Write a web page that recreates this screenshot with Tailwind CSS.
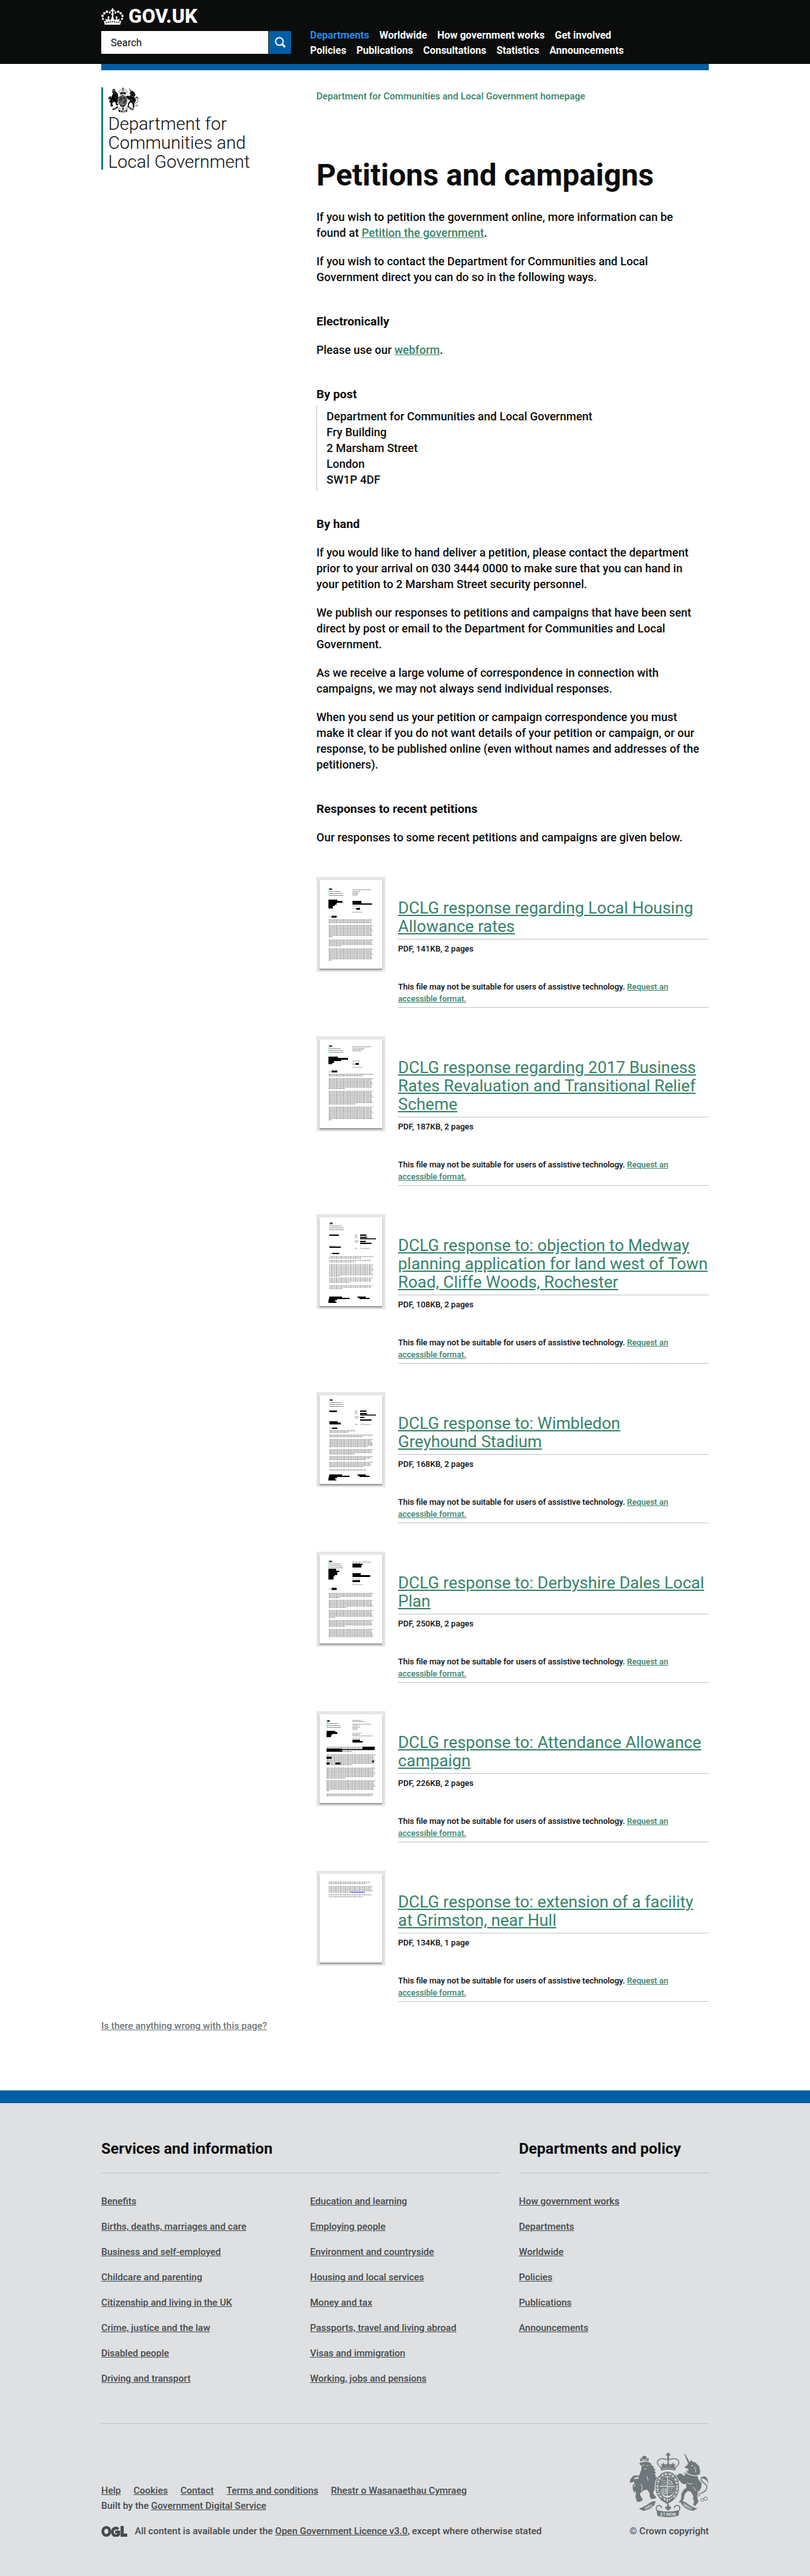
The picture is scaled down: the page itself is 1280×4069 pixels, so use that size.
<!DOCTYPE html>
<html lang="en">
<head>
<meta charset="utf-8">
<meta name="viewport" content="width=device-width, initial-scale=1">
<title>Petitions and campaigns - GOV.UK</title>
<script src="https://cdn.jsdelivr.net/npm/@tailwindcss/browser@4"></script>
</head>
<body class="bg-white text-[#0b0c0c] [font-family:Roboto,'Liberation_Sans',sans-serif]">

<!-- Shared royal arms drawing -->
<svg class="hidden" aria-hidden="true">
  <symbol id="arms" viewBox="30 27 376 307">
    <!-- crown -->
    <g fill="currentColor">
      <path d="M209 27h8v6h6v8h-6v12h-8V41h-6v-8h6z"/>
      <circle cx="213" cy="55" r="5"/>
      <path d="M176 96q37-12 74 0l-3 17q-34-9-68 0z"/>
      <path d="M184 94l-6-14 8 4 4-10 5 10 8-4-4 13zM204 91l-3-11 7 4 5-12 5 12 7-4-3 11zM226 93l-3-13 8 4 5-10 4 10 8-4-6 14z"/>
    </g>
    <g fill="none" stroke="currentColor" stroke-width="6" stroke-dasharray="6 2">
      <path d="M176 96Q154 76 166 64q14-15 44-2"/>
      <path d="M250 96Q272 76 260 64q-14-15-44-2"/>
    </g>
    <path d="M213 60v24" stroke="currentColor" stroke-width="7" stroke-dasharray="5 2"/>
    <path d="M184 105q29-8 58 0" fill="none" stroke="var(--paper)" stroke-width="3" stroke-dasharray="6 3"/>
    <!-- lion -->
    <g fill="currentColor">
      <path d="M81 70l-2-17 9 4 2-12 6 0 2-4 4 0 2 4 6 0 1 11 9-4 0 16q-20-6-39 2z"/>
      <path d="M85 76q17-10 35-4l12 8 2 8 12 5-4 6 12 10-7 4 9 11-8 2 7 12-9 2 2 16 8 18 14 22-2 6-18-22q2 22-8 36l4 12 10 10-4 8-18 2-8-8-2-22-12-16-18 6-16 14 4 12 10 14-2 8-16 6-10-2-6-22 2-30 12-24 2-46 10-26 4-22-8-4-4-8 8-6z"/>
      <path d="M98 142l-24 10-18 0-8 10 6 12 22 4 30-6zM88 170l-28 6-6 12-8 8 6 12 14 6 8-8 22-10zM140 130l16 14 14-2 8 8-4 12-14 4-22-12z"/>
      <path d="M30 171l4-18 12-14 10-4 16 6-18 4-6 22z"/>
    </g>
    <path d="M54 216q-12-22-4-36 30-18 26-34-6-14-22-2" fill="none" stroke="currentColor" stroke-width="6"/>
    <path d="M87 62l26-2M92 88l8-3M110 88l8 2M98 104l12 2M84 176q10 16 2 34M112 140l6 20" fill="none" stroke="var(--paper)" stroke-width="3"/>
    <!-- unicorn -->
    <g fill="currentColor">
      <path d="M289 33l6 3 24 44-9 4z"/>
      <path d="M306 84l12-14 4-10 6 10 14 4 18 18 6 28-8 14-6 4 6 18 14 16-2 24-16 16-4 20 6 26-12 22-12-2 4-18-4-28-12-20-14-2-14 14-6 28-12 12-12 0 12-14 2-28 12-20 12-8-2-20-14-22-16 8-14 24-6-6 12-28-20-10 2-8 30 4 22 0 8-14 14-22-16 2-10-4z"/>
      <path d="M302 100l8-14 22 0-4 14-18 8zM268 158l10-8 16 8 4 16-10 4-14-8zM262 126l16 2 8 12-10 6-14-8z"/>
      <path d="M370 146l18-6 12 12 4 24-10-18z"/>
    </g>
    <path d="M364 222q30-8 34-30-2-14-18-22-16-14-8-22 12-12 24 8" fill="none" stroke="currentColor" stroke-width="5"/>
    <path d="M298 122q28 22 64 12" fill="none" stroke="var(--paper)" stroke-width="4"/>
    <path d="M300 113q30 22 64 12" fill="none" stroke="currentColor" stroke-width="7" stroke-dasharray="4 3"/>
    <path d="M322 90l10-2M336 94q12 12 8 28M304 170q10 10 24 6M332 190l14 20" fill="none" stroke="var(--paper)" stroke-width="3"/>
    <g fill="none" stroke="currentColor" stroke-width="3">
      <circle cx="295" cy="128" r="5"/><circle cx="284" cy="141" r="5"/><circle cx="353" cy="182" r="6"/><circle cx="358" cy="205" r="6"/><circle cx="357" cy="228" r="6"/><circle cx="337" cy="245" r="6"/><circle cx="349" cy="260" r="7"/><circle cx="375" cy="252" r="7"/><circle cx="391" cy="246" r="8"/>
    </g>
    <!-- garter and quartered shield -->
    <ellipse cx="209" cy="190" rx="60" ry="74" fill="var(--paper)"/>
    <ellipse cx="209" cy="190" rx="46" ry="62" fill="none" stroke="currentColor" stroke-width="20"/>
    <ellipse cx="209" cy="190" rx="47" ry="62" fill="none" stroke="var(--paper)" stroke-width="10" stroke-dasharray="3 4 7 3 2 4 8 6"/>
    <ellipse cx="209" cy="188" rx="36" ry="46" fill="currentColor"/>
    <path d="M209 142v92M173 188h72" stroke="var(--paper)" stroke-width="4"/>
    <g fill="none" stroke="var(--paper)" stroke-width="3">
      <path d="M184 160h20M182 170h22M180 180h24M214 196h24M214 206h22M214 216h18" stroke-dasharray="7 3"/>
      <path d="M216 178V156q12 2 18 22zM221 172l8-8"/>
      <path d="M184 196v18q6 8 12 12M191 196v24M198 196v28M204 196v30"/>
    </g>
    <path d="M182 242l26 18 26-18 6 10-31 20-32-20z" fill="currentColor"/>
    <path d="M194 250l4 4M208 258v5M222 250l-3 5" stroke="var(--paper)" stroke-width="4"/>
    <!-- motto scroll -->
    <g fill="currentColor">
      <path d="M74 294l20 10q30-2 54-28l6-18q-12 0-22 4-26 20-58 32z"/>
      <path d="M352 294l-20 10q-30-2-54-28l-8-18q12 0 24 4 26 22 58 32z"/>
      <path d="M158 300q54 16 108 0l-4 28q-50 12-100 0z"/>
      <path d="M213 268q8 10 3 18 9-7 11 2 0 8-10 8l4 6h-16l4-6q-10 0-10-8 2-9 11-2-5-8 3-18z"/>
    </g>
    <path d="M158 302q-6-22 12-24 14 2 10 14M266 302q8-22-10-24-16 2-12 14" fill="none" stroke="currentColor" stroke-width="5"/>
    <g fill="var(--paper)" font-family="Roboto, sans-serif" font-weight="700" text-anchor="middle">
      <text x="213" y="327" font-size="20">ET MON</text>
      <text x="122" y="290" font-size="17" transform="rotate(-28 122 290)">DIEU</text>
      <text x="302" y="290" font-size="17" transform="rotate(30 302 290)">DROIT</text>
    </g>
  </symbol>
</svg>

<header class="bg-[#0b0c0c] text-white">
  <div class="mx-auto flex max-w-[960px] flex-wrap gap-x-[30px] pt-2 pb-[9px]">
    <div class="w-[300px]">
      <a href="#" class="flex h-9 items-center gap-2 text-[31px] leading-9 font-extrabold" aria-label="GOV.UK">
        <svg class="h-[26px] w-[35px]" viewBox="15 21 106 78" fill="currentColor" aria-hidden="true">
          <path d="M66 21h6v7h7v7h-7v10h-6V35h-7v-7h7z"/>
          <circle cx="69" cy="49" r="6"/><path d="M66 50h6v18h-6z"/>
          <circle cx="42" cy="37" r="6"/><circle cx="55" cy="41" r="5"/><circle cx="30" cy="45" r="6"/><circle cx="21" cy="57" r="6"/><circle cx="23" cy="71" r="5"/>
          <circle cx="96" cy="37" r="6"/><circle cx="83" cy="41" r="5"/><circle cx="108" cy="45" r="6"/><circle cx="117" cy="57" r="6"/><circle cx="115" cy="71" r="5"/>
          <path d="M26 75q4 8 12 10l-4-15 10 6 6-12 6 14 5-4 8-12 8 12 5 4 6-14 6 12 10-6-4 15q8-2 12-10l-6 24H32z"/>
          <path d="M44 64l6-6 6 6-6 5zM82 64l6-6 6 6-6 5zM62 66l7-6 7 6-7 6z"/>
          <path d="M36 90q33-9 66 0" fill="none" stroke="#0b0c0c" stroke-width="4" stroke-dasharray="7 3"/>
        </svg>
        <span>GOV.UK</span>
      </a>
      <form class="mt-[5px] flex gap-px" onsubmit="return false">
        <input id="search" type="text" aria-label="Search" placeholder="Search" class="h-9 min-w-0 flex-1 bg-white px-[15px] text-base text-[#0b0c0c] placeholder:text-[#0b0c0c]">
        <button type="submit" aria-label="Search" class="flex h-9 w-[35px] items-center justify-center bg-[#005ea5]">
          <svg class="size-[18px]" viewBox="0 0 18 18" fill="none" stroke="#fff" aria-hidden="true"><circle cx="7.5" cy="7.5" r="6" stroke-width="2"/><path d="M11.5 11.5l5 5" stroke-width="3"/></svg>
        </button>
      </form>
    </div>
    <nav class="flex-1 pt-9 text-base leading-6 font-bold" aria-label="Main">
      <ul class="flex flex-wrap gap-x-4">
        <li><a href="#" class="text-[#1d8feb]">Departments</a></li>
        <li><a href="#">Worldwide</a></li>
        <li><a href="#">How government works</a></li>
        <li><a href="#">Get involved</a></li>
      </ul>
      <ul class="flex flex-wrap gap-x-4">
        <li><a href="#">Policies</a></li>
        <li><a href="#">Publications</a></li>
        <li><a href="#">Consultations</a></li>
        <li><a href="#">Statistics</a></li>
        <li><a href="#">Announcements</a></li>
      </ul>
    </nav>
  </div>
</header>

<div class="mx-auto max-w-[960px]">
  <div class="h-[10px] bg-[#005ea5]"></div>

  <main class="flex pt-[27px] text-lg leading-[25px] font-medium">
    <div class="w-[340px] shrink-0">
      <a href="#" class="flex h-[130px] w-[250px] flex-col gap-[3px] border-l-3 border-[#00857e] pl-2 text-[28px] leading-[30px] font-light">
        <svg class="h-10 w-12 shrink-0 text-black [--paper:#fff]" aria-hidden="true"><use href="#arms"/></svg>
        <span>Department for Communities and Local Government</span>
      </a>
    </div>

    <div class="min-w-0 flex-1">
      <p class="pt-1 text-[15px] leading-5"><a href="#" class="text-[#37836a]">Department for Communities and Local Government homepage</a></p>
      <h1 class="mt-[90px] text-5xl leading-[50px] font-bold">Petitions and campaigns</h1>
      <p class="mt-7">If you wish to petition the government online, more information can be<br>found at <a href="#" class="text-[#37836a] underline">Petition the government</a>.</p>
      <p class="mt-5">If you wish to contact the Department for Communities and Local Government direct you can do so in the following ways.</p>
      <h2 class="mt-[45px] text-[19px] leading-[25px] font-bold">Electronically</h2>
      <p class="mt-5">Please use our <a href="#" class="text-[#37836a] underline">webform</a>.</p>
      <h2 class="mt-[45px] text-[19px] leading-[25px] font-bold">By post</h2>
      <address class="mt-[5px] border-l border-[#bfc1c3] py-[5px] pl-[15px] not-italic">Department for Communities and Local Government<br>Fry Building<br>2 Marsham Street<br>London<br>SW1P 4DF</address>
      <h2 class="mt-10 text-[19px] leading-[25px] font-bold">By hand</h2>
      <p class="mt-5">If you would like to hand deliver a petition, please contact the department prior to your arrival on 030 3444 0000 to make sure that you can hand in<br>your petition to 2 Marsham Street security personnel.</p>
      <p class="mt-5">We publish our responses to petitions and campaigns that have been sent direct by post or email to the Department for Communities and Local Government.</p>
      <p class="mt-5">As we receive a large volume of correspondence in connection with campaigns, we may not always send individual responses.</p>
      <p class="mt-5">When you send us your petition or campaign correspondence you must<br>make it clear if you do not want details of your petition or campaign, or our<br>response, to be published online (even without names and addresses of the petitioners).</p>
      <h2 class="mt-[45px] text-[19px] leading-[25px] font-bold">Responses to recent petitions</h2>
      <p class="mt-5">Our responses to some recent petitions and campaigns are given below.</p>

      <div class="mt-[50px] flex flex-col gap-[45px]">
        <section class="flex items-start gap-5">
          <a href="#" aria-label="Preview" class="block bg-[#e6e6e6] p-[5px]"><svg data-doc="housing" class="h-[140px] w-[99px] bg-white shadow-[0_2px_2px_rgba(0,0,0,0.4)]" viewBox="0 0 99 140"></svg></a>
          <div class="flex-1 border-b border-[#bfc1c3] pt-[35px] pb-1 text-[13px] leading-[19px]">
            <h3 class="border-b border-[#bfc1c3] pb-[5px] text-[26px] leading-[29px] font-normal"><a href="#" class="text-[#37836a] underline">DCLG response regarding Local Housing Allowance rates</a></h3>
            <p class="pt-[5px]">PDF, 141KB, 2 pages</p>
            <p class="mt-[41px]">This file may not be suitable for users of assistive technology. <a href="#" class="text-[#37836a] underline">Request an accessible format.</a></p>
          </div>
        </section>
        <section class="flex items-start gap-5">
          <a href="#" aria-label="Preview" class="block bg-[#e6e6e6] p-[5px]"><svg data-doc="rates" class="h-[140px] w-[99px] bg-white shadow-[0_2px_2px_rgba(0,0,0,0.4)]" viewBox="0 0 99 140"></svg></a>
          <div class="flex-1 border-b border-[#bfc1c3] pt-[35px] pb-1 text-[13px] leading-[19px]">
            <h3 class="border-b border-[#bfc1c3] pb-[5px] text-[26px] leading-[29px] font-normal"><a href="#" class="text-[#37836a] underline">DCLG response regarding 2017 Business Rates Revaluation and Transitional Relief Scheme</a></h3>
            <p class="pt-[5px]">PDF, 187KB, 2 pages</p>
            <p class="mt-[41px]">This file may not be suitable for users of assistive technology. <a href="#" class="text-[#37836a] underline">Request an accessible format.</a></p>
          </div>
        </section>
        <section class="flex items-start gap-5">
          <a href="#" aria-label="Preview" class="block bg-[#e6e6e6] p-[5px]"><svg data-doc="medway" class="h-[140px] w-[99px] bg-white shadow-[0_2px_2px_rgba(0,0,0,0.4)]" viewBox="0 0 99 140"></svg></a>
          <div class="flex-1 border-b border-[#bfc1c3] pt-[35px] pb-1 text-[13px] leading-[19px]">
            <h3 class="border-b border-[#bfc1c3] pb-[5px] text-[26px] leading-[29px] font-normal"><a href="#" class="text-[#37836a] underline">DCLG response to: objection to Medway planning application for land west of Town Road, Cliffe Woods, Rochester</a></h3>
            <p class="pt-[5px]">PDF, 108KB, 2 pages</p>
            <p class="mt-[41px]">This file may not be suitable for users of assistive technology. <a href="#" class="text-[#37836a] underline">Request an accessible format.</a></p>
          </div>
        </section>
        <section class="flex items-start gap-5">
          <a href="#" aria-label="Preview" class="block bg-[#e6e6e6] p-[5px]"><svg data-doc="wimbledon" class="h-[140px] w-[99px] bg-white shadow-[0_2px_2px_rgba(0,0,0,0.4)]" viewBox="0 0 99 140"></svg></a>
          <div class="flex-1 border-b border-[#bfc1c3] pt-[35px] pb-1 text-[13px] leading-[19px]">
            <h3 class="border-b border-[#bfc1c3] pb-[5px] text-[26px] leading-[29px] font-normal"><a href="#" class="text-[#37836a] underline">DCLG response to: Wimbledon<br>Greyhound Stadium</a></h3>
            <p class="pt-[5px]">PDF, 168KB, 2 pages</p>
            <p class="mt-[41px]">This file may not be suitable for users of assistive technology. <a href="#" class="text-[#37836a] underline">Request an accessible format.</a></p>
          </div>
        </section>
        <section class="flex items-start gap-5">
          <a href="#" aria-label="Preview" class="block bg-[#e6e6e6] p-[5px]"><svg data-doc="derbyshire" class="h-[140px] w-[99px] bg-white shadow-[0_2px_2px_rgba(0,0,0,0.4)]" viewBox="0 0 99 140"></svg></a>
          <div class="flex-1 border-b border-[#bfc1c3] pt-[35px] pb-1 text-[13px] leading-[19px]">
            <h3 class="border-b border-[#bfc1c3] pb-[5px] text-[26px] leading-[29px] font-normal"><a href="#" class="text-[#37836a] underline">DCLG response to: Derbyshire Dales Local Plan</a></h3>
            <p class="pt-[5px]">PDF, 250KB, 2 pages</p>
            <p class="mt-[41px]">This file may not be suitable for users of assistive technology. <a href="#" class="text-[#37836a] underline">Request an accessible format.</a></p>
          </div>
        </section>
        <section class="flex items-start gap-5">
          <a href="#" aria-label="Preview" class="block bg-[#e6e6e6] p-[5px]"><svg data-doc="attendance" class="h-[140px] w-[99px] bg-white shadow-[0_2px_2px_rgba(0,0,0,0.4)]" viewBox="0 0 99 140"></svg></a>
          <div class="flex-1 border-b border-[#bfc1c3] pt-[35px] pb-1 text-[13px] leading-[19px]">
            <h3 class="border-b border-[#bfc1c3] pb-[5px] text-[26px] leading-[29px] font-normal"><a href="#" class="text-[#37836a] underline">DCLG response to: Attendance Allowance campaign</a></h3>
            <p class="pt-[5px]">PDF, 226KB, 2 pages</p>
            <p class="mt-[41px]">This file may not be suitable for users of assistive technology. <a href="#" class="text-[#37836a] underline">Request an accessible format.</a></p>
          </div>
        </section>
        <section class="flex items-start gap-5">
          <a href="#" aria-label="Preview" class="block bg-[#e6e6e6] p-[5px]"><svg data-doc="grimston" class="h-[140px] w-[99px] bg-white shadow-[0_2px_2px_rgba(0,0,0,0.4)]" viewBox="0 0 99 140"></svg></a>
          <div class="flex-1 border-b border-[#bfc1c3] pt-[35px] pb-1 text-[13px] leading-[19px]">
            <h3 class="border-b border-[#bfc1c3] pb-[5px] text-[26px] leading-[29px] font-normal"><a href="#" class="text-[#37836a] underline">DCLG response to: extension of a facility at Grimston, near Hull</a></h3>
            <p class="pt-[5px]">PDF, 134KB, 1 page</p>
            <p class="mt-[41px]">This file may not be suitable for users of assistive technology. <a href="#" class="text-[#37836a] underline">Request an accessible format.</a></p>
          </div>
        </section>
      </div>
    </div>
  </main>

  <p class="mt-7 mb-[92px] text-[15px] leading-5 font-medium"><a href="#" class="text-[#6f777b] underline">Is there anything wrong with this page?</a></p>
</div>

<footer class="border-t-20 border-[#005ea5] bg-[#dee0e2] text-[15px] leading-5 font-medium text-[#454a4c]">
  <div class="mx-auto max-w-[960px] pt-[60px] pb-[61px]">
    <div class="flex gap-[30px] border-b border-[#bfc1c3] pb-[61px]">
      <section class="flex-[21]">
        <h2 class="border-b border-[#bfc1c3] pb-[25px] text-2xl leading-[25px] font-bold text-[#0b0c0c]">Services and information</h2>
        <div class="mt-[34px] grid grid-cols-2 gap-x-[30px]">
          <ul class="flex flex-col gap-5">
            <li><a href="#" class="underline">Benefits</a></li>
            <li><a href="#" class="underline">Births, deaths, marriages and care</a></li>
            <li><a href="#" class="underline">Business and self-employed</a></li>
            <li><a href="#" class="underline">Childcare and parenting</a></li>
            <li><a href="#" class="underline">Citizenship and living in the UK</a></li>
            <li><a href="#" class="underline">Crime, justice and the law</a></li>
            <li><a href="#" class="underline">Disabled people</a></li>
            <li><a href="#" class="underline">Driving and transport</a></li>
          </ul>
          <ul class="flex flex-col gap-5">
            <li><a href="#" class="underline">Education and learning</a></li>
            <li><a href="#" class="underline">Employing people</a></li>
            <li><a href="#" class="underline">Environment and countryside</a></li>
            <li><a href="#" class="underline">Housing and local services</a></li>
            <li><a href="#" class="underline">Money and tax</a></li>
            <li><a href="#" class="underline">Passports, travel and living abroad</a></li>
            <li><a href="#" class="underline">Visas and immigration</a></li>
            <li><a href="#" class="underline">Working, jobs and pensions</a></li>
          </ul>
        </div>
      </section>
      <section class="flex-[10]">
        <h2 class="border-b border-[#bfc1c3] pb-[25px] text-2xl leading-[25px] font-bold text-[#0b0c0c]">Departments and policy</h2>
        <ul class="mt-[34px] flex flex-col gap-5">
          <li><a href="#" class="underline">How government works</a></li>
          <li><a href="#" class="underline">Departments</a></li>
          <li><a href="#" class="underline">Worldwide</a></li>
          <li><a href="#" class="underline">Policies</a></li>
          <li><a href="#" class="underline">Publications</a></li>
          <li><a href="#" class="underline">Announcements</a></li>
        </ul>
      </section>
    </div>

    <div class="flex items-end justify-between pt-[45px]">
      <div>
        <ul class="flex flex-wrap gap-x-5 leading-6">
          <li><a href="#" class="underline">Help</a></li>
          <li><a href="#" class="underline">Cookies</a></li>
          <li><a href="#" class="underline">Contact</a></li>
          <li><a href="#" class="underline">Terms and conditions</a></li>
          <li><a href="#" class="underline">Rhestr o Wasanaethau Cymraeg</a></li>
        </ul>
        <p class="leading-6">Built by the <a href="#" class="underline">Government Digital Service</a></p>
        <div class="mt-[18px] flex items-center gap-3">
          <svg class="h-[17px] w-[41px]" viewBox="0 0 41 17" role="img" aria-label="Open Government Licence" fill="none" stroke="#454a4c">
            <ellipse cx="8" cy="8.5" rx="5.500" ry="6.200" stroke-width="4.500"/>
            <path d="M27 5A5.500 6.200 0 1 0 27.500 13V9.500H22" stroke-width="4.500"/>
            <path d="M33 0v14.500h8" stroke-width="5"/>
          </svg>
          <p>All content is available under the <a href="#" class="underline">Open Government Licence v3.0</a>, except where otherwise stated</p>
        </div>
      </div>
      <a href="#" class="flex flex-col items-end gap-3">
        <svg class="h-[102px] w-[125px] text-[#6f777b] [--paper:#dee0e2]" aria-hidden="true"><use href="#arms"/></svg>
        <span>© Crown copyright</span>
      </a>
    </div>
  </div>
</footer>

<script>
// Document previews. text: [x, y, lines, width, lastWidth]; fine: narrow address lines; black: redacted areas.
const docs = {
  housing: { head: [14.5, 12], fine: [[52, 15.5, 1, 30, 30], [52, 18, 4, 12, 8], [52, 41, 1, 12, 12], [52, 45, 1, 6, 6], [52, 51, 1, 16, 16], [14.5, 58, 1, 4, 4]],
    black: 'M14 31h14v2h8v3h-9v3h-3v2h-3v4h-7zM52 33h14v4h17v2h-31zM58 44h6v3h-6zM19 56.500h8v3h-8z',
    text: [[14.5, 63, 3, 69, 68], [14.5, 72, 9, 70, 6], [14.5, 95, 5, 70, 20], [14.5, 109, 9, 70, 5]] },
  rates: { head: [14.5, 8], fine: [[52, 11.500, 1, 30, 30], [52, 14, 3, 20, 14], [52, 34, 1, 12, 12], [52, 38, 2, 8, 6], [52, 44, 1, 16, 16], [14.5, 51, 1, 4, 4]],
    black: 'M14 27h15v2h16v3h-11v2h-11v3h-3v2h-6zM57 37h5v3h-5zM19 49h9v3h-9z',
    text: [[14.5, 55, 2, 70, 54], [14.5, 62, 8, 70, 26], [14.5, 82, 10, 70, 42], [14.5, 107, 10, 70, 4]] },
  medway: { head: [15.5, 7], fine: [[56, 28, 3, 5, 4], [56, 37, 2, 6, 5], [56, 49, 1, 4, 4], [65, 49, 1, 14, 14], [15.5, 45, 1, 10, 10], [15.5, 57, 1, 4, 4]],
    black: 'M15.500 27h15v2h-15zM64 27h10v2h-10zM64 30.500h11v2h-11zM64 33h25v1.500h-25zM64 37h9v2h-9zM64 40h18v2h-18zM15.500 46h18v2h-18zM20 56h11v2h-11zM15.500 125h20v2h12v2h-20v2h-3v2h2v2h-13zM60 125h13v2h6v2h-16v-2h-3z',
    text: [[15.5, 62, 2, 70, 50], [15.5, 68, 2, 66, 40], [15.5, 75, 9, 70, 18], [15.5, 96, 4, 68, 32], [15.5, 108, 3, 68, 20]], loose: true },
  wimbledon: { head: [15.5, 5], fine: [[56, 25, 3, 5, 4], [56, 34, 2, 6, 5], [56, 46, 1, 4, 4], [65, 46, 1, 16, 16], [15.5, 52, 1, 4, 4]],
    black: 'M15.500 24h12v2.500h-12zM64 24h10v2h-10zM64 28h11v2h-11zM64 30.500h25v1.500h-25zM64 34h7v2h-7zM64 38h18v2h-18zM15.500 41h13v2h5v3h-18zM20 51h8v2h-8zM15.500 125h20v2h12v2h-20v2h-3v2h2v1.500h-13zM60 125h13v2h6v2h-16v-2h-3z',
    text: [[15.5, 56, 2, 41, 30], [15.5, 63, 2, 68, 52], [15.5, 70, 6, 69, 60], [15.5, 86, 4, 69, 40], [15.5, 97, 3, 68, 58], [15.5, 106, 4, 68, 54], [15.5, 118, 1, 58, 58]] },
  derbyshire: { head: [14.5, 8], fine: [[52, 11.500, 2, 30, 12], [52, 38, 1, 12, 12], [52, 47, 1, 16, 16], [14.5, 54, 1, 4, 4]],
    black: 'M14 22h12v3h5v2h-3v5h-4v2h-2v5h-8zM52 14h16v2h-2v4h-14zM52 29h13v3h15v3h-28zM52 40h12v3h-12zM19 52h8v3.500h-8z',
    text: [[14.5, 61, 4, 70, 18], [14.5, 72, 6, 70, 28], [14.5, 88, 6, 70, 10], [14.5, 104, 5, 70, 26], [14.5, 118, 6, 70, 70]] },
  attendance: { head: [11, 8], fine: [[52, 9.500, 2, 14, 20], [52, 15.500, 2, 30, 10], [52, 20, 3, 12, 8], [52, 30, 3, 14, 32], [52, 38, 1, 12, 12]],
    black: 'M11 26h14v2h3v3h-8v2h-2v3h-7zM52 40h12v2h4v2.500h-16zM11 54h25v1h32v-4h19v5h-51v3h-25zM11 67h8v3h-8zM11 76h5v3h-5zM25 76h8v3h-8zM83 73h3v3h-3z',
    text: [[11, 52, 4, 77, 40], [11, 64, 8, 77, 40], [11, 85, 8, 77, 30], [11, 105, 8, 77, 5], [11, 126, 2, 74, 72]] },
  grimston: { fine: [], black: '', text: [[14.5, 13, 2, 66, 60], [14.5, 20, 5, 70, 34], [14.5, 33, 1, 68, 68], [14.5, 36, 1, 54, 54]], loose: true, link: true }
};
document.querySelectorAll('[data-doc]').forEach(svg => {
  const d = docs[svg.dataset.doc];
  const rows = (list, gap) => list.map(([x, y, n, w, last]) =>
    Array.from({ length: n }, (_, i) => `M${x} ${y + i * gap}h${i === n - 1 ? last : w - (i * 7) % 4}`).join('')).join('');
  let out = '';
  if (d.head) {
    const [x, y] = d.head;
    out += `<path d="M${x} ${y}v13.500" stroke="#7cc5c1" stroke-width=".7"/><path d="M${x + 1} ${y + 1}h4v3h-4z" fill="#444"/>` +
      `<path d="M${x + 1} ${y + 6.5}h18M${x + 1} ${y + 9.5}h21M${x + 1} ${y + 12.5}h22" stroke="#777" stroke-width="1.200" stroke-dasharray="2 .4"/>`;
  }
  out += `<path d="${rows(d.fine, 2)}" stroke="#888" stroke-width="1" stroke-dasharray="2 .5"/>`;
  out += `<path d="${rows(d.text, 2.2)}" stroke="${d.loose ? '#555' : '#777'}" stroke-width="${d.loose ? .9 : 1}" stroke-dasharray="${d.loose ? '1.500 1 2.500 .8 1 .7' : '4 .6 2 .5 3 .6'}"/>`;
  out += `<path d="${d.black}" fill="#000"/>`;
  if (d.link) out += '<path d="M49 29h22" stroke="#33f" stroke-width="1.200"/>';
  svg.innerHTML = out;
});
</script>
</body>
</html>
